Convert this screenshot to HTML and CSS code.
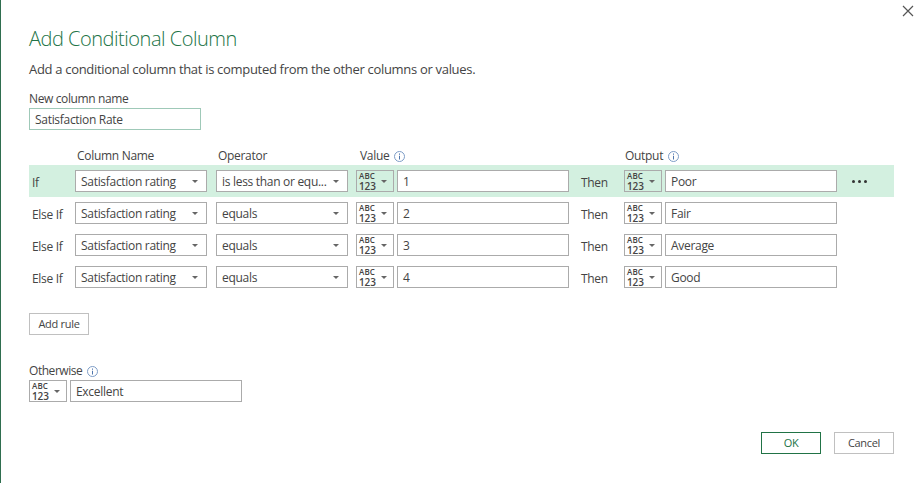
FILE: index.html
```
<!DOCTYPE html>
<html lang="en">
<head>
<meta charset="utf-8">
<title>Add Conditional Column</title>
<link rel="stylesheet" href="styles.css">
</head>
<body>
<svg class="defs" width="0" height="0">
  <symbol id="info" viewBox="0 0 11 11"><circle cx="5.5" cy="5.5" r="5" fill="none" stroke="#7d9cc6"/><path d="M5 2.5h1v1.2H5zM5 4.7h1v3.8H5z" fill="#4f76ad"/></symbol>
</svg>
<main class="dialog">
  <header class="top"><button class="close" aria-label="Close"><svg width="12" height="12" viewBox="0 0 12 12"><path d="M1 1l10 10M11 1L1 11" stroke="#555" stroke-width="1.2"/></svg></button></header>
  <h1><span>Add Conditional Column</span></h1>
  <p class="intro"><span>Add a conditional column that is computed from the other columns or values.</span></p>
  <label class="name-label">New column name</label>
  <div class="input name">Satisfaction Rate</div>

  <section class="rules">
    <div class="row head"><span class="h-col">Column Name</span><span class="h-op">Operator</span><span class="h-val">Value <svg class="info"><use href="#info"/></svg></span><span class="h-out">Output <svg class="info"><use href="#info"/></svg></span></div>
    <div class="row active">
      <span class="word">If</span><div class="select col">Satisfaction rating</div><div class="select op long">is less than or equ...</div>
      <div class="type"><span class="abc">ABC</span><span class="num">123</span></div><div class="input val">1</div>
      <span class="word then">Then</span><div class="type"><span class="abc">ABC</span><span class="num">123</span></div><div class="input">Poor</div><span class="dots"><i></i><i></i><i></i></span>
    </div>
    <div class="row">
      <span class="word">Else If</span><div class="select col">Satisfaction rating</div><div class="select op">equals</div>
      <div class="type"><span class="abc">ABC</span><span class="num">123</span></div><div class="input val">2</div>
      <span class="word then">Then</span><div class="type"><span class="abc">ABC</span><span class="num">123</span></div><div class="input">Fair</div>
    </div>
    <div class="row">
      <span class="word">Else If</span><div class="select col">Satisfaction rating</div><div class="select op">equals</div>
      <div class="type"><span class="abc">ABC</span><span class="num">123</span></div><div class="input val">3</div>
      <span class="word then">Then</span><div class="type"><span class="abc">ABC</span><span class="num">123</span></div><div class="input">Average</div>
    </div>
    <div class="row">
      <span class="word">Else If</span><div class="select col">Satisfaction rating</div><div class="select op">equals</div>
      <div class="type"><span class="abc">ABC</span><span class="num">123</span></div><div class="input val">4</div>
      <span class="word then">Then</span><div class="type"><span class="abc">ABC</span><span class="num">123</span></div><div class="input">Good</div>
    </div>
  </section>

  <button class="btn add">Add rule</button>
  <div class="otherwise-label">Otherwise <svg class="info"><use href="#info"/></svg></div>
  <div class="otherwise"><div class="type"><span class="abc">ABC</span><span class="num">123</span></div><div class="input">Excellent</div></div>
  <footer class="actions"><button class="btn ok">OK</button><button class="btn">Cancel</button></footer>
</main>
</body>
</html>
```

FILE: styles.css
```
* { box-sizing: border-box; }
body { margin: 0; background: #fff; color: #444; font: 12px/16px "Open Sans", "Noto Sans", sans-serif; letter-spacing: -0.3px; }
.defs { display: block; height: 0; }
.dialog { height: 483px; border-left: 1px solid #2f6e4f; padding: 0 29px 0 28px; overflow: hidden; white-space: nowrap; }
.top { height: 24px; display: flex; justify-content: flex-end; margin-right: -20px; padding-top: 5px; }
.close { width: 12px; height: 12px; padding: 0; border: 0; background: none; display: block; }
.close svg { display: block; }
h1 { margin: 0; height: 30px; font-size: 20px; line-height: 30px; font-weight: 300; color: #217346; letter-spacing: -0.48px; }
.intro { margin: 5px 0 0; height: 20px; font-size: 13px; line-height: 20px; letter-spacing: -0.31px; }
.name-label { display: block; margin-top: 12px; height: 17px; letter-spacing: -0.37px; }
.input, .select { height: 22px; border: 1px solid #ababab; background: #fff; line-height: 21px; padding-left: 5px; }
.input { width: 172px; }
.name { border-color: #9fc9b8; }
.rules { margin-top: 17px; }
.row { display: flex; height: 32px; width: 865px; padding: 5px 0 0 3px; }
.row.head { height: 18px; padding: 0 0 0 48px; line-height: 18px; }
.h-col { width: 141px; }
.h-op { width: 142px; }
.h-val { width: 265px; }
.info { width: 11px; height: 11px; vertical-align: -2px; margin-left: 2px; }
.active { background: #d3f0e0; }
.word { width: 43px; line-height: 25px; }
.then { width: 43px; margin-left: 12px; }
.select { width: 132px; position: relative; }
.op { margin: 0 8px 0 9px; }
.select::after, .type::after { content: ""; position: absolute; top: 9px; right: 8px; border: 3px solid transparent; border-top: 3px solid #666; border-bottom: 0; }
.type::after { right: 6px; }
.type { position: relative; width: 38px; height: 22px; border: 1px solid #ababab; margin-right: 3px; padding-left: 2px; flex: none; font-weight: 600; }
.type span { display: block; }
.abc { font-size: 8px; line-height: 8px; height: 9px; padding-top: 1px; letter-spacing: 0.1px; }
.num { font-size: 10px; line-height: 12px; letter-spacing: -0.1px; }
.dots { display: flex; gap: 3px; margin: 10px 0 0 15px; }
.dots i { width: 3px; height: 3px; border-radius: 50%; background: #333; }
.btn { width: 60px; height: 22px; padding: 0; border: 1px solid #c0c0c0; background: #fff; color: #444; font: 11px/20px "Open Sans", "Noto Sans", sans-serif; letter-spacing: -0.3px; }
.add { display: block; margin-top: 20px; }
.otherwise-label { margin-top: 28px; height: 17px; letter-spacing: -0.45px; }
.otherwise { display: flex; }
.actions { display: flex; justify-content: flex-end; gap: 13px; margin-top: 30px; }
.ok { border-color: #217346; color: #217346; }
```
